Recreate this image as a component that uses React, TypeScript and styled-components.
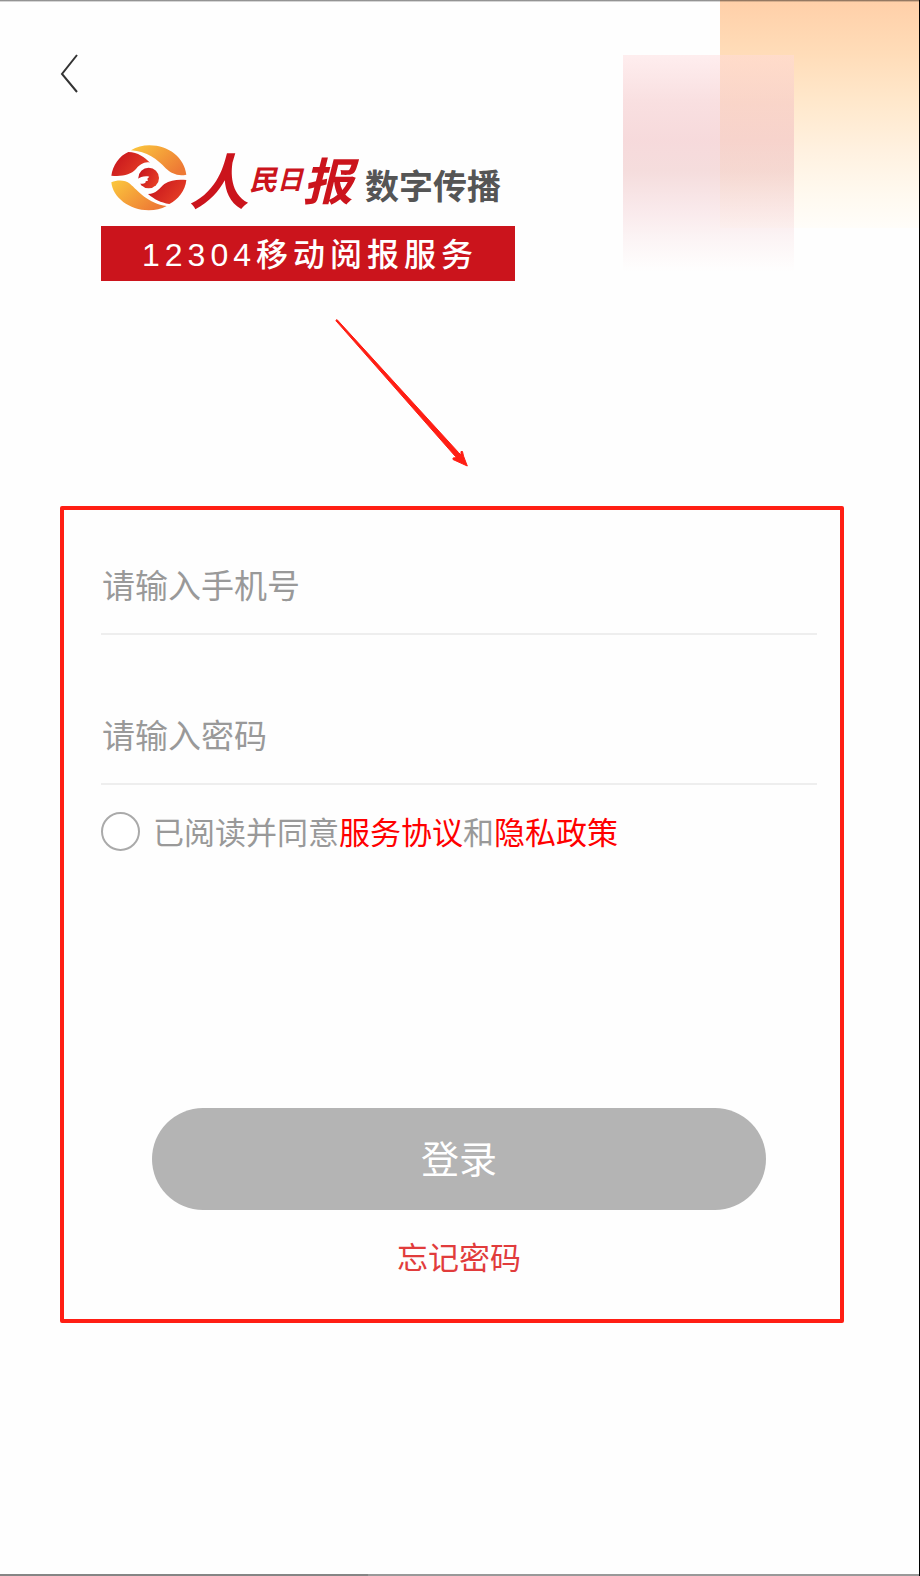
import React, { useState } from "react";
import styled, { createGlobalStyle } from "styled-components";

const GlobalStyle = createGlobalStyle`
  *, *::before, *::after { box-sizing: border-box; }
  body {
    margin: 0;
    background: #fefefe;
    font-family: "Noto Sans CJK SC", "Noto Sans", sans-serif;
  }
  button, input { font-family: inherit; }
`;

const Page = styled.div`
  position: relative;
  display: flex;
  flex-direction: column;
  min-height: 100vh;
  overflow: hidden;
  border-right: 1px solid #000;
  background: #fefefe;
`;

const TopEdge = styled.div`
  position: absolute;
  inset: 0 0 auto;
  height: 2px;
  background: linear-gradient(rgba(0, 0, 0, 0.42) 50%, rgba(0, 0, 0, 0.16) 50%);
`;

const OrangeGlow = styled.div`
  position: absolute;
  top: 0;
  right: 0;
  width: 199px;
  height: 228px;
  background: linear-gradient(
    #ffcfa8 0%,
    #ffdcb8 23%,
    #ffe8cc 45%,
    #fff1e0 66%,
    #fff9ef 85%,
    #fffdf9 100%
  );
`;

const PinkGlow = styled.div`
  position: absolute;
  top: 55px;
  right: 125px;
  width: 171px;
  height: 216px;
  background: linear-gradient(
    rgba(255, 219, 221, 0.47) 0%,
    rgba(244, 196, 198, 0.53) 22%,
    rgba(240, 188, 191, 0.55) 40%,
    rgba(236, 188, 188, 0.5) 54%,
    rgba(242, 200, 205, 0.38) 72%,
    rgba(246, 215, 218, 0.22) 87%,
    rgba(255, 250, 250, 0.05) 100%
  );
`;

const Header = styled.header`
  position: relative;
  padding: 54px 60px 0;
`;

const BackButton = styled.button`
  display: block;
  width: 20px;
  height: 40px;
  padding: 0;
  border: 0;
  background: none;
  cursor: pointer;
`;

const Brand = styled.section`
  position: relative;
  align-self: flex-start;
  width: 414px;
  margin: 48px 0 0 101px;
`;

const BrandRow = styled.div`
  display: flex;
  align-items: center;
  height: 72px;
  padding-left: 10px;
`;

const Masthead = styled.span`
  display: flex;
  align-items: center;
  margin-left: 2px;
  color: #cb141c;
  font-weight: 700;
  font-style: italic;
`;

const MastheadChar = styled.span<{ $size: number }>`
  font-size: ${(p) => p.$size}px;
  line-height: 72px;
`;

const BrandSuffix = styled.span`
  margin-left: auto;
  padding: 14px 14px 0 0;
  color: #555;
  font-size: 34px;
  font-weight: 700;
  line-height: 72px;
`;

const Banner = styled.h1`
  margin: 12px 0 0;
  padding: 3px 0 0 4px;
  background: #cb141c;
  color: #fff;
  font-family: "Liberation Sans", "Noto Sans CJK SC", sans-serif;
  font-size: 32px;
  font-weight: 500;
  line-height: 52px;
  letter-spacing: 5px;
  text-align: center;
  white-space: nowrap;
`;

const Pointer = styled.svg`
  display: block;
  flex: none;
  margin: 38px 0 39px 335px;
`;

const LoginForm = styled.form`
  display: flex;
  flex-direction: column;
  margin: 0 75px 0 60px;
  padding: 51px 23px 42px 37px;
  border: 4px solid #ff1e14;
  border-radius: 2px;
`;

const Field = styled.input`
  width: 100%;
  height: 74px;
  padding: 0 0 26px 1px;
  border: 0;
  border-bottom: 2px solid #eee;
  border-radius: 0;
  outline: none;
  background: transparent;
  color: #333;
  font-size: 33px;

  & + & { margin-top: 76px; }
  &::placeholder { color: #999; opacity: 1; }
`;

const Agreement = styled.div`
  display: flex;
  align-items: center;
  gap: 13px;
  height: 40px;
  margin-top: 26px;
  color: #999;
  font-size: 31px;
  line-height: 40px;
  white-space: nowrap;
`;

const Tick = styled.input`
  appearance: none;
  flex: none;
  width: 39px;
  height: 39px;
  margin: 0;
  border: 2px solid #aaa;
  border-radius: 50%;
  background: #fff;

  &:checked { background: radial-gradient(#e13c3c 50%, #fff 54%); }
`;

const PolicyLink = styled.a`
  color: #f00;
  text-decoration: none;
`;

const SubmitButton = styled.button`
  height: 102px;
  margin: 257px 51px 0;
  padding: 0 0 6px;
  border: 0;
  border-radius: 51px;
  background: #b4b4b4;
  color: #fff;
  font-size: 38px;
  cursor: pointer;
`;

const ForgotLink = styled.a`
  align-self: center;
  margin: 26px 0 1px;
  color: #e13c3c;
  font-size: 31px;
  line-height: 40px;
  text-decoration: none;
`;

const BottomEdge = styled.div`
  height: 2px;
  margin-top: auto;
  background: linear-gradient(to right, #858585 40%, #999 40%);
`;

function Emblem() {
  return (
    <svg width="76" height="66" viewBox="65 43 228 198" role="img" aria-label="人民日报数字传播">
      <defs>
        <linearGradient id="gold" x1="0" y1="0" x2="1" y2="0.6">
          <stop offset="0" stopColor="#fbc93d" />
          <stop offset="1" stopColor="#ee7a35" />
        </linearGradient>
        <linearGradient id="red" x1="0" y1="0" x2="1" y2="0.5">
          <stop offset="0" stopColor="#c3101c" />
          <stop offset="1" stopColor="#e53d25" />
        </linearGradient>
      </defs>
      <path fill="url(#gold)" d="M125 59C142 49 160 44 180 44C240 44 285 82 291 132C266 137 247 130 229 113C203 85 174 62 125 59Z" />
      <path fill="url(#red)" d="M66 135C70 105 90 75 117 64C146 65 166 80 182 96C165 92 151 102 140 115C123 133 100 138 66 135Z" />
      <path fill="url(#gold)" d="M66 155C84 147 107 147 122 159C145 180 177 219 232 226C215 235 199 239 178 239C120 239 70 200 66 155Z" />
      <path fill="url(#red)" d="M291 148C288 180 265 208 240 220C214 216 195 206 176 190C200 190 211 172 225 160C244 147 268 146 291 148Z" />
      <circle cx="178" cy="142" r="31" fill="url(#red)" />
      <path fill="#fefefe" d="M144 146C153 139 166 135 180 138L174 144L176 150L169 152C170 158 164 161 153 159L144 160Z" />
    </svg>
  );
}

export default function App() {
  const [agreed, setAgreed] = useState(false);

  return (
    <>
      <GlobalStyle />
      <Page>
        <OrangeGlow />
        <PinkGlow />
        <TopEdge />
        <Header>
          <BackButton type="button" aria-label="返回">
            <svg width="20" height="40" viewBox="0 0 20 40" fill="none" stroke="#333" strokeWidth="2">
              <path d="M17 1L2 20L17 38" />
            </svg>
          </BackButton>
        </Header>

        <Brand>
          <BrandRow>
            <Emblem />
            <Masthead>
              <MastheadChar $size={60}>人</MastheadChar>
              <MastheadChar $size={28}>民</MastheadChar>
              <MastheadChar $size={26}>日</MastheadChar>
              <MastheadChar $size={50}>报</MastheadChar>
            </Masthead>
            <BrandSuffix>数字传播</BrandSuffix>
          </BrandRow>
          <Banner>12304移动阅报服务</Banner>
        </Brand>

        <Pointer width="136" height="148" viewBox="0 0 136 148" aria-hidden="true">
          <path
            fill="#ff1e14"
            stroke="#ff1e14"
            strokeLinejoin="round"
            d="M2 0.6L123.5 133.5L126 136L126 132.5L127.5 132.5L128.5 137L132.3 147L118 140.5L118 139L122 138.5L120 137L0.8 1.6Z"
          />
        </Pointer>

        <LoginForm onSubmit={(e: React.FormEvent) => e.preventDefault()}>
          <Field type="tel" placeholder="请输入手机号" aria-label="手机号" />
          <Field type="password" placeholder="请输入密码" aria-label="密码" />
          <Agreement>
            <Tick
              id="agree"
              type="checkbox"
              checked={agreed}
              onChange={(e: React.ChangeEvent<HTMLInputElement>) => setAgreed(e.target.checked)}
            />
            <span>
              <label htmlFor="agree">已阅读并同意</label>
              <PolicyLink href="#terms">服务协议</PolicyLink>和
              <PolicyLink href="#privacy">隐私政策</PolicyLink>
            </span>
          </Agreement>
          <SubmitButton type="submit">登录</SubmitButton>
          <ForgotLink href="#forgot">忘记密码</ForgotLink>
        </LoginForm>

        <BottomEdge />
      </Page>
    </>
  );
}
